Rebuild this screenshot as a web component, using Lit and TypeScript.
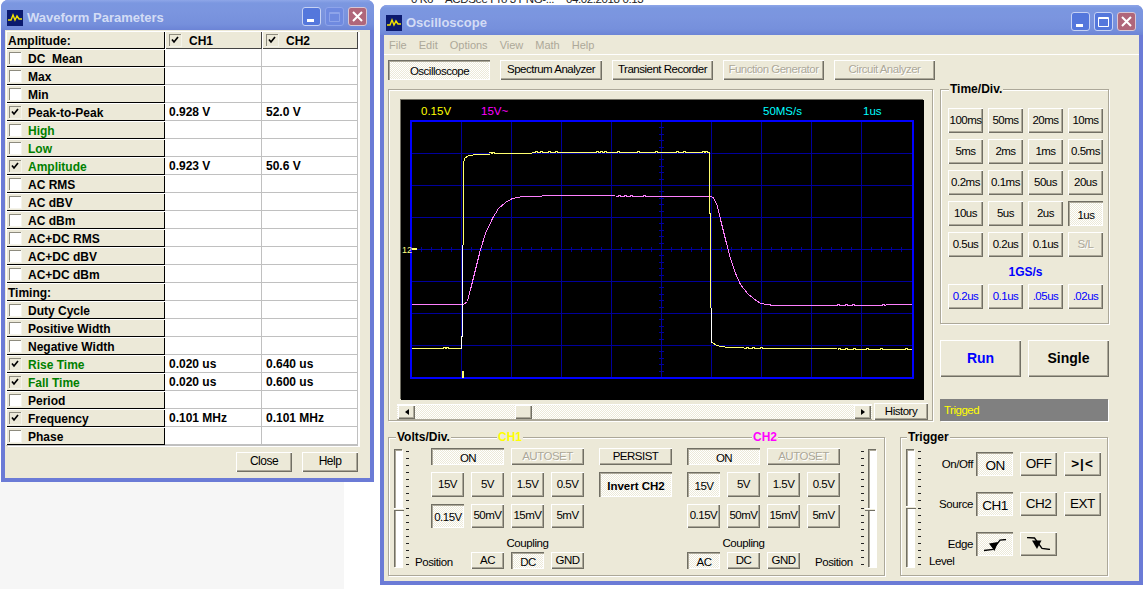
import { LitElement, html, css, svg, nothing } from 'lit';
import { customElement } from 'lit/decorators.js';
import { classMap } from 'lit/directives/class-map.js';

type Row = { name?: string; section?: boolean; green?: boolean; on?: boolean; ch1?: string; ch2?: string };

const ROWS: Row[] = [
  { name: 'DC  Mean' }, { name: 'Max' }, { name: 'Min' },
  { name: 'Peak-to-Peak', on: true, ch1: '0.928 V', ch2: '52.0 V' },
  { name: 'High', green: true }, { name: 'Low', green: true },
  { name: 'Amplitude', green: true, on: true, ch1: '0.923 V', ch2: '50.6 V' },
  { name: 'AC RMS' }, { name: 'AC dBV' }, { name: 'AC dBm' },
  { name: 'AC+DC RMS' }, { name: 'AC+DC dBV' }, { name: 'AC+DC dBm' },
  { name: 'Timing:', section: true },
  { name: 'Duty Cycle' }, { name: 'Positive Width' }, { name: 'Negative Width' },
  { name: 'Rise Time', green: true, on: true, ch1: '0.020 us', ch2: '0.640 us' },
  { name: 'Fall Time', green: true, on: true, ch1: '0.020 us', ch2: '0.600 us' },
  { name: 'Period' },
  { name: 'Frequency', on: true, ch1: '0.101 MHz', ch2: '0.101 MHz' },
  { name: 'Phase' },
];

const TIME = ['100ms', '50ms', '20ms', '10ms', '5ms', '2ms', '1ms', '0.5ms', '0.2ms', '0.1ms', '50us', '20us', '10us', '5us', '2us', '1us', '0.5us', '0.2us', '0.1us', 'S/L'];
const FAST = ['0.2us', '0.1us', '.05us', '.02us'];

// screen coordinates, origin at the top left corner of the black area
const ox = 401;
const oy = 99;
const pts = (list: number[][]) => list.map(([x, y]) => `${x - ox + 0.5},${y - oy + 0.5}`).join(' ');

const YELLOW_UP = [[411, 347], [461, 347]];
const WHITE_UP = [[461, 347], [461, 335], [462, 335], [462, 243]];
const YELLOW_TOP = [[463, 243], [463, 162], [464, 157], [468, 154], [477, 153], [502, 152], [562, 151], [709, 151], [709, 212], [710, 212], [710, 306]];
const WHITE_DOWN = [[711, 306], [711, 341]];
const YELLOW_LOW = [[712, 341], [716, 344], [727, 346], [760, 347], [912, 348]];
const MAGENTA = [
  [411, 303], [463, 303], [467, 300], [470, 288], [475, 268], [480, 248], [485, 232], [492, 217], [498, 207],
  [505, 201], [512, 197], [522, 195], [562, 194], [665, 195], [710, 195], [713, 196], [717, 205], [720, 218],
  [725, 238], [730, 257], [735, 272], [740, 283], [747, 292], [753, 297], [760, 302], [767, 303], [773, 304],
  [860, 304], [912, 303],
];

// little one pixel wiggles on the flat parts of the traces
const YELLOW_BLIPS = [
  [489, 152], [492, 152], [535, 151], [540, 151], [548, 151], [555, 151], [596, 151], [600, 151], [604, 151], [617, 151],
  [637, 151], [655, 151], [676, 151], [683, 151], [702, 151], [705, 151], [443, 347], [446, 347],
  [746, 347], [752, 347], [760, 347], [785, 348], [797, 348], [800, 348], [811, 348], [822, 348], [838, 348], [845, 348], [853, 348], [866, 348], [880, 348], [905, 348],
];
const MAGENTA_BLIPS = [[590, 195], [605, 195], [612, 195], [618, 195], [624, 195], [630, 195], [643, 195], [837, 304], [845, 304], [852, 304], [882, 304]];

@customElement('app-root')
export class AppRoot extends LitElement {
  static styles = css`
    :host {
      display: block;
      position: relative;
      width: 1147px;
      height: 589px;
      overflow: hidden;
      background: #fff;
      font: 11.5px "Liberation Sans", Arial, sans-serif;
      color: #000;
    }
    .backdrop { position: absolute; left: 0; top: 482px; width: 344px; height: 107px; background: #f6f6f6; }
    .behind { position: absolute; left: 411px; top: -7px; display: flex; gap: 12px; font-size: 11.5px; letter-spacing: -0.4px; white-space: pre; color: #222; }

    .win {
      position: absolute;
      box-sizing: border-box;
      display: flex;
      flex-direction: column;
      padding: 0 4px 4px;
      background: #6b7bd6;
      border-radius: 7px 7px 0 0;
    }
    .params { left: 1px; top: 0; width: 373px; height: 482px; }
    .scope { left: 380px; top: 5px; width: 763px; height: 580px; }
    .title {
      height: 30px;
      flex: none;
      display: flex;
      align-items: center;
      margin: 0 -4px;
      padding: 5px 7px 0 6px;
      box-sizing: border-box;
      border-radius: 7px 7px 0 0;
      background: linear-gradient(#8ea6e8 0, #7b97e0 3px, #7b95df 12px, #7690dc 24px, #6c84d6 30px);
      color: #d3dcf5;
      font-size: 13px;
      font-weight: bold;
    }
    .title .name { flex: 1; margin-left: 4px; }
    .capbtn {
      width: 19px;
      height: 19px;
      margin-left: 4px;
      border-radius: 3px;
      border: 1px solid #c6d2f4;
      box-sizing: border-box;
      background: #5477dc;
      position: relative;
      top: -1px;
    }
    .capbtn svg { display: block; }
    .capbtn.close { background: #b0667a; border-color: #d8c6d4; }
    .capbtn.faint { background: #6f8ae0; border-color: #8ea4ea; }

    .client { flex: 1; background: #ece9d8; display: flex; flex-direction: column; min-height: 0; }

    .btn {
      box-sizing: border-box;
      display: flex;
      align-items: center;
      justify-content: center;
      white-space: nowrap;
      background: #ece9d8;
      letter-spacing: -0.5px;
      box-shadow: inset 1px 1px 0 #fff, inset -1px -1px 0 #716f64, inset -2px -2px 0 #aca899;
      padding-bottom: 2px;
    }
    .btn.down {
      padding: 2px 0 0 1px;
      background: repeating-conic-gradient(#ece9d8 0 25%, #fff 0 50%) 0 0 / 2px 2px;
      box-shadow: inset 1px 1px 0 #716f64, inset 2px 2px 0 #aca899, inset -1px -1px 0 #fff;
    }
    .btn.off { color: #aca899; text-shadow: 1px 1px 0 #fff; }
    .btn.blue { color: #0000ff; }
    .btn.strong { font-weight: bold; letter-spacing: 0; }

    /* waveform parameters table */
    .table {
      margin: 1px 0 0 1px;
      width: 352px;
      display: grid;
      grid-template-columns: 159px 97px 96px;
      grid-auto-rows: 18px;
      font-size: 12px;
      font-weight: bold;
      border-bottom: 1px solid #c0c0c0;
      box-sizing: content-box;
      box-shadow: 2px 1px 0 #fff;
    }
    .head, .label {
      display: flex;
      align-items: center;
      box-sizing: border-box;
      background: #ece9d8;
      box-shadow: inset 1px 1px 0 #fff, inset -1px -1px 0 #000;
      padding: 1px 0 0 2px;
      white-space: pre;
    }
    .head.ch { gap: 7px; padding-left: 4px; box-shadow: inset 1px 1px 0 #fff, inset -1px -1px 0 #444; }
    .label.row { padding-left: 3px; gap: 6px; }
    .label.green { color: #008000; }
    .cell {
      box-sizing: border-box;
      background: #fff;
      border-right: 1px solid #c0c0c0;
      border-bottom: 1px solid #c0c0c0;
      padding-left: 4px;
      line-height: 19px;
      white-space: nowrap;
    }
    .check {
      width: 13px;
      height: 13px;
      flex: none;
      box-sizing: border-box;
      background: #fff;
      white-space: normal;
      box-shadow: inset 1px 1px 0 #8d8b7e;
      border-right: 1px solid #f4f3ea;
      border-bottom: 1px solid #f4f3ea;
    }
    .check.on { background: #ece9d8; }
    .check svg { display: block; }
    .foot { display: flex; justify-content: flex-end; gap: 10px; padding: 6px 12px 0 0; }
    .foot .btn { width: 56px; height: 20px; font-size: 12px; }

    /* oscilloscope window */
    .menu {
      height: 19px;
      flex: none;
      display: flex;
      align-items: center;
      gap: 12px;
      padding-left: 5px;
      font-size: 11px;
      color: #aca899;
      border-bottom: 1px solid #fff;
      box-sizing: content-box;
    }
    .tabs { display: flex; gap: 10px; padding: 5px 0 0 4px; }
    .tabs .btn { width: 101px; height: 20px; }
    .tabs .btn:nth-child(-n + 2) { width: 102px; }
    .main { display: flex; gap: 7px; margin: 9px 0 0 4px; }

    .frame {
      box-sizing: border-box;
      position: relative;
      border: 1px solid #aca899;
      box-shadow: 1px 1px 0 #fff, inset 1px 1px 0 #fff;
    }
    .legend {
      position: absolute;
      top: -8px;
      padding: 0 1px;
      background: #ece9d8;
      font-weight: bold;
      font-size: 12px;
      line-height: 14px;
      white-space: nowrap;
    }

    .view { width: 545px; height: 332px; padding: 10px 0 0 8px; }
    .screen { display: block; width: 523px; height: 300px; margin-left: 4px; background: #000; box-shadow: -1px -1px 0 #716f64; }
    .screen text { font: 11.5px "Liberation Sans", Arial, sans-serif; }
    .scrollrow { display: flex; gap: 2px; margin-top: 3px; align-items: center; }
    .bar {
      width: 475px;
      height: 14px;
      display: flex;
      justify-content: space-between;
      align-items: stretch;
      position: relative;
      padding: 0 1px;
      box-sizing: border-box;
      background: repeating-conic-gradient(#ece9d8 0 25%, #fff 0 50%) 0 0 / 2px 2px;
      box-shadow: 0 1px 0 #aca899, 0 -1px 0 #fff;
    }
    .bar .btn { width: 17px; padding: 0; }
    .bar .thumb { position: absolute; left: 118px; top: 0; bottom: 0; width: 17px; }
    .arrow { width: 0; height: 0; border: 3px solid transparent; }
    .arrow.l { border-right: 4px solid #000; border-left: 0; }
    .arrow.r { border-left: 4px solid #000; border-right: 0; }
    .history { width: 54px; height: 17px; }

    .side { width: 169px; }
    .time { height: 235px; padding: 18px 0 0 7px; }
    .timegrid { display: grid; grid-template-columns: repeat(4, 35px); gap: 6px 5px; grid-auto-rows: 25px; }
    .rate { text-align: center; color: #0000ff; font-weight: bold; font-size: 12px; line-height: 14px; margin: 8px 0 5px; padding-right: 5px; }
    .runrow { display: flex; gap: 7px; margin-top: 16px; }
    .runrow .btn { width: 81px; height: 37px; font-size: 14px; font-weight: bold; letter-spacing: 0; }
    .status {
      margin-top: 22px;
      height: 22px;
      width: 168px;
      box-sizing: border-box;
      background: #808080;
      color: #ffff00;
      line-height: 22px;
      padding-left: 4px;
      letter-spacing: -0.5px;
      box-shadow: 1px 1px 0 #fff;
    }

    .bottom { display: flex; gap: 15px; margin: 16px 0 0 4px; }
    .volts { width: 497px; height: 139px; display: flex; padding: 11px 0 0 5px; }
    .trigger { width: 208px; height: 139px; display: flex; padding: 11px 0 0 5px; }
    .slider { display: flex; gap: 4px; height: 118px; flex: none; }
    .slider.flip { flex-direction: row-reverse; }
    .track {
      width: 8px;
      height: 118px;
      position: relative;
      box-sizing: border-box;
      background: #fff;
      box-shadow: inset 1px 1px 0 #716f64, inset 2px 2px 0 #aca899, 1px 1px 0 #fff;
    }
    .knob { position: absolute; left: 0; width: 10px; height: 3px; background: #ece9d8; box-shadow: inset 0 -1px 0 #716f64, inset 0 1px 0 #fff; }
    .slider.flip .knob { left: -3px; }
    .ticks { display: flex; flex-direction: column; justify-content: space-between; width: 3px; padding: 2px 0; box-sizing: border-box; }
    .ticks i { display: block; height: 1px; background: #222; }

    .channel { display: grid; grid-template-columns: repeat(4, 33px); column-gap: 7px; grid-template-rows: 17px 25px 24px; row-gap: 7px; flex: none; margin-top: -1px; }
    .channel .wide { grid-column: span 2; }
    .couple {
      grid-column: 1 / -1;
      display: grid;
      grid-template-columns: repeat(4, 33px);
      column-gap: 7px;
      grid-template-rows: 16px 17px;
      margin-top: 1px;
    }
    .cap, .pos, .tag, .level { letter-spacing: -0.4px; font-size: 11.5px; }
    .couple .cap { grid-column: 2 / 5; text-align: center; line-height: 15px; }
    .couple .pos { grid-column: 1; align-self: end; margin-left: -16px; white-space: nowrap; line-height: 14px; }
    .couple.right .cap { grid-column: 1 / 4; }
    .couple.right .pos { grid-column: 4; grid-row: 2; margin-left: 8px; }
    .sl1 { margin-right: 22px; }
    .sl2 { margin-left: 21px; }
    .mid { display: flex; flex-direction: column; gap: 7px; margin: -1px 15px 0; width: 73px; flex: none; }
    .mid .btn:first-child { height: 17px; }
    .mid .btn:last-child { height: 25px; }

    .trigbody { margin-left: 1px; padding-top: 3px; }
    .triggrid { display: grid; grid-template-columns: 47px repeat(3, 37px); column-gap: 7px; row-gap: 16px; grid-auto-rows: 24px; }
    .triggrid .btn { font-size: 13.5px; }
    .triggrid .btn b { letter-spacing: 1px; }
    .triggrid .tag { text-align: right; line-height: 24px; margin-right: -4px; white-space: nowrap; }
    .level { margin: -2px 0 0 7px; line-height: 14px; }
  `;

  icon() {
    return html`<svg width="16" height="16" viewBox="0 0 16 16" style="flex:none">
      <rect width="16" height="16" fill="#0b1a6e" />
      <polyline points="1,10 4,10 6,5 8,10 10,6 12,9 15,9" fill="none" stroke="#f4e400" stroke-width="1.4" />
    </svg>`;
  }

  caption(maxFaint: boolean) {
    return html`
      <div class="capbtn">
        <svg width="17" height="17"><rect x="4" y="11" width="7" height="3" fill="#fff" /></svg>
      </div>
      <div class=${classMap({ capbtn: true, faint: maxFaint })}>
        <svg width="17" height="17"><path d="M3.5 4.5h10v9h-10z M3.5 5.5h10" fill="none" stroke=${maxFaint ? '#8ea4ea' : '#fff'} stroke-width="1" /></svg>
      </div>
      <div class="capbtn close">
        <svg width="17" height="17"><path d="M4 4l9 9M13 4l-9 9" stroke="#fff" stroke-width="2" /></svg>
      </div>`;
  }

  check(on: boolean) {
    return html`<span class=${classMap({ check: true, on })}>
      ${on ? html`<svg width="12" height="12"><path d="M3 5.5l2 2.5 4-5" fill="none" stroke="#000" stroke-width="1.7" /></svg>` : nothing}
    </span>`;
  }

  btn(text: unknown, opts: { down?: boolean; off?: boolean; blue?: boolean; strong?: boolean; extra?: string } = {}) {
    const cls: Record<string, boolean> = {
      btn: true,
      down: !!opts.down,
      off: !!opts.off,
      blue: !!opts.blue,
      strong: !!opts.strong,
    };
    if (opts.extra) cls[opts.extra] = true;
    return html`<div class=${classMap(cls)}>${text}</div>`;
  }

  slider(knob: number, flip = false, extra = '') {
    return html`<div class="slider ${flip ? 'flip' : ''} ${extra}">
      <div class="track"><div class="knob" style="top:${knob}px"></div></div>
      <div class="ticks">${Array.from({ length: 17 }, () => html`<i></i>`)}</div>
    </div>`;
  }

  channel(down15: boolean, down015: boolean, couple: string, right: boolean) {
    const row1 = ['15V', '5V', '1.5V', '0.5V'];
    const row2 = ['0.15V', '50mV', '15mV', '5mV'];
    return html`<div class="channel">
      ${this.btn('ON', { down: true, extra: 'wide' })}
      ${this.btn('AUTOSET', { off: true, extra: 'wide' })}
      ${row1.map((t) => this.btn(t, { down: t === '15V' && down15 }))}
      ${row2.map((t) => this.btn(t, { down: t === '0.15V' && down015 }))}
      <div class="couple ${right ? 'right' : ''}">
        <div class="cap">Coupling</div>
        ${right ? html`<span></span>` : html`<div class="pos">Position</div>`}
        ${['AC', 'DC', 'GND'].map((t) => this.btn(t, { down: t === couple }))}
        ${right ? html`<div class="pos">Position</div>` : nothing}
      </div>
    </div>`;
  }

  blips(list: number[][], color: string) {
    return list.map(([x, y]) => svg`
      <rect x=${x - ox} y=${y - oy - 1} width="3" height="1" fill=${color} />
      <rect x=${x - ox + 1} y=${y - oy} width="1" height="1" fill="#000" />
    `);
  }

  plot() {
    const vs = [461, 511, 561, 611, 661, 711, 761, 811, 861];
    const hs = [152, 184, 216, 248, 280, 312, 344];
    const ticksH = Array.from({ length: 50 }, (_, i) => 411 + i * 10);
    const ticksV = Array.from({ length: 40 }, (_, i) => Math.round(120 + i * 6.4));
    return svg`
      <g shape-rendering="crispEdges" fill="#00009c">
        ${vs.map((x) => svg`<rect x=${x - ox} y="21" width="1" height="258" />`)}
        ${hs.map((y) => svg`<rect x="10" y=${y - oy} width="502" height="1" />`)}
        ${ticksH.map((x) => svg`<rect x=${x - ox} y=${248 - oy - 2} width="1" height="5" />`)}
        ${ticksV.map((y) => svg`<rect x=${661 - ox - 2} y=${y - oy} width="5" height="1" />`)}
      </g>
      <rect x="10" y="21" width="502" height="257" fill="none" stroke="#0000ff" stroke-width="2" shape-rendering="crispEdges" />
      <g fill="none" stroke-width="1" shape-rendering="crispEdges">
        <polyline points=${pts(MAGENTA)} stroke="#ff80ff" />
        <polyline points=${pts(YELLOW_UP)} stroke="#ffff70" />
        <polyline points=${pts(YELLOW_TOP)} stroke="#ffff70" />
        <polyline points=${pts(YELLOW_LOW)} stroke="#ffff70" />
        <polyline points=${pts(WHITE_UP)} stroke="#fff" />
        <polyline points=${pts(WHITE_DOWN)} stroke="#fff" />
      </g>
      <g shape-rendering="crispEdges">
        ${this.blips(YELLOW_BLIPS, '#ffff70')}
        ${this.blips(MAGENTA_BLIPS, '#ff80ff')}
      </g>
      <rect x="61" y="271" width="2" height="7" fill="#ffff70" shape-rendering="crispEdges" />
      <rect x="11" y="148" width="5" height="2" fill="#ffff70" shape-rendering="crispEdges" />
      <text x="20" y="15" fill="#ffff00">0.15V</text>
      <text x="80" y="15" fill="#ff00ff">15V~</text>
      <text x="362" y="15" fill="#00ffff">50MS/s</text>
      <text x="462" y="15" fill="#00ffff">1us</text>
      <text x="1" y="153" fill="#ffff80" style="font-size:9px">12</text>
    `;
  }

  edge(rising: boolean) {
    const line = rising ? 'M0 11.5l9-1 7-9.500 6-.5' : 'M0 .5l7.500.5 7.500 10.500 8 1';
    const head = rising ? 'M5 4.500l9-1.500-3.500 9z' : 'M5 3.500h9.500l-4.500 8.500z';
    return html`<svg width="23" height="13" viewBox="0 0 23 13">
      <path d=${line} fill="none" stroke="#000" stroke-width="1.300" />
      <path d=${head} fill="#000" />
    </svg>`;
  }

  render() {
    return html`
      <div class="backdrop"></div>
      <div class="behind"><span>0 K6</span><span>ACDSee Pro 3 PNG-...</span><span>04.02.2018 0:13</span></div>

      <section class="win params">
        <div class="title">${this.icon()}<span class="name">Waveform Parameters</span>${this.caption(true)}</div>
        <div class="client">
          <div class="table">
            <div class="head">Amplitude:</div>
            <div class="head ch">${this.check(true)}CH1</div>
            <div class="head ch">${this.check(true)}CH2</div>
            ${ROWS.map((r) => html`
              <div class=${classMap({ label: true, row: !r.section, green: !!r.green })}>${r.section ? nothing : this.check(!!r.on)}<span>${r.name}</span></div>
              <div class="cell">${r.ch1 ?? ''}</div>
              <div class="cell">${r.ch2 ?? ''}</div>
            `)}
          </div>
          <div class="foot">${this.btn('Close')}${this.btn('Help')}</div>
        </div>
      </section>

      <section class="win scope">
        <div class="title">${this.icon()}<span class="name">Oscilloscope</span>${this.caption(false)}</div>
        <div class="client">
          <div class="menu">${['File', 'Edit', 'Options', 'View', 'Math', 'Help'].map((m) => html`<span>${m}</span>`)}</div>
          <div class="tabs">
            ${this.btn('Oscilloscope', { down: true })}
            ${this.btn('Spectrum Analyzer')}
            ${this.btn('Transient Recorder')}
            ${this.btn('Function Generator', { off: true })}
            ${this.btn('Circuit Analyzer', { off: true })}
          </div>
          <div class="main">
            <div class="frame view">
              <svg class="screen" viewBox="0 0 523 300">${this.plot()}</svg>
              <div class="scrollrow">
                <div class="bar">
                  ${this.btn(html`<span class="arrow l"></span>`)}
                  ${this.btn('', { extra: 'thumb' })}
                  ${this.btn(html`<span class="arrow r"></span>`)}
                </div>
                ${this.btn('History', { extra: 'history' })}
              </div>
            </div>
            <div class="side">
              <div class="frame time">
                <span class="legend" style="left:8px">Time/Div.</span>
                <div class="timegrid">
                  ${TIME.map((t) => this.btn(t, { down: t === '1us', off: t === 'S/L' }))}
                </div>
                <div class="rate">1GS/s</div>
                <div class="timegrid">${FAST.map((t) => this.btn(t, { blue: true }))}</div>
              </div>
              <div class="runrow">${this.btn('Run', { blue: true })}${this.btn('Single')}</div>
              <div class="status">Trigged</div>
            </div>
          </div>
          <div class="bottom">
            <div class="frame volts">
              <span class="legend" style="left:7px">Volts/Div.</span>
              <span class="legend" style="left:108px;color:#ffff00">CH1</span>
              <span class="legend" style="left:363px;color:#ff00ff">CH2</span>
              ${this.slider(59, false, 'sl1')}
              ${this.channel(false, true, 'DC', false)}
              <div class="mid">
                ${this.btn('PERSIST')}
                ${this.btn('Invert CH2', { down: true, strong: true })}
              </div>
              ${this.channel(true, false, 'AC', true)}
              ${this.slider(59, true, 'sl2')}
            </div>
            <div class="frame trigger">
              <span class="legend" style="left:6px">Trigger</span>
              ${this.slider(57)}
              <div class="trigbody">
                <div class="triggrid">
                  <div class="tag">On/Off</div>
                  ${this.btn('ON', { down: true })}${this.btn('OFF')}
                  ${this.btn(html`<b>&gt;|&lt;</b>`)}
                  <div class="tag">Source</div>
                  ${this.btn('CH1', { down: true })}${this.btn('CH2')}${this.btn('EXT')}
                  <div class="tag">Edge</div>
                  ${this.btn(this.edge(true), { down: true })}${this.btn(this.edge(false))}
                </div>
                <div class="level">Level</div>
              </div>
            </div>
          </div>
        </div>
      </section>
    `;
  }
}
